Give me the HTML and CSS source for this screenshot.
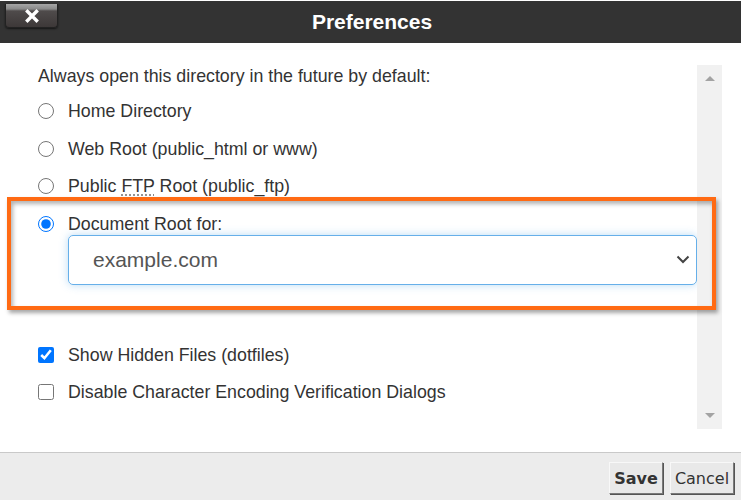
FILE: index.html
```html
<!DOCTYPE html>
<html>
<head>
<meta charset="utf-8">
<link rel="stylesheet" href="styles.css">
</head>
<body>
<div class="dialog">
  <div class="header">
    <div class="close-cell">
      <button class="close-btn" aria-label="Close">
        <svg width="14" height="14" viewBox="0 0 14 14"><path d="M2.5 2.5 L11.5 11.5 M11.5 2.5 L2.5 11.5" stroke="#fff" stroke-width="3.4" stroke-linecap="square"/></svg>
      </button>
    </div>
    <div class="title">Preferences</div>
    <div></div>
  </div>
  <div class="body">
    <div class="scroll">
      <div class="content">
        <div class="intro">Always open this directory in the future by default:</div>
        <label class="row r1"><input type="radio" name="dir" class="ctl"><span>Home Directory</span></label>
        <label class="row r2"><input type="radio" name="dir" class="ctl"><span>Web Root (public_html or www)</span></label>
        <label class="row r3"><input type="radio" name="dir" class="ctl"><span>Public <abbr title="File Transfer Protocol">FTP</abbr> Root (public_ftp)</span></label>
        <label class="row r4"><input type="radio" name="dir" class="ctl" checked><span>Document Root for:</span></label>
        <div class="select">
          <span class="select-text">example.com</span>
          <svg class="chevron" width="14" height="9" viewBox="0 0 14 9"><path d="M1.5 1.5 L7 7 L12.5 1.5" fill="none" stroke="#444" stroke-width="2"/></svg>
        </div>
        <label class="row r5"><input type="checkbox" class="ctl" checked><span>Show Hidden Files (dotfiles)</span></label>
        <label class="row r6"><input type="checkbox" class="ctl"><span>Disable Character Encoding Verification Dialogs</span></label>
      </div>
      <div class="scrollbar">
        <span class="arrow up"></span>
        <span class="arrow down"></span>
      </div>
    </div>
  </div>
  <div class="footer">
    <button class="btn save">Save</button>
    <button class="btn">Cancel</button>
  </div>
  <div class="highlight"></div>
</div>
</body>
</html>
```
FILE: styles.css
```css
* { box-sizing: border-box; }
html, body { margin: 0; padding: 0; background: #fff; }
body { font-family: "Liberation Sans", Arial, sans-serif; color: #333; }
.dialog { position: relative; width: 741px; height: 500px; padding-top: 1px; overflow: hidden; }

.header {
  height: 42px;
  background: #333;
  display: grid;
  grid-template-columns: 1fr auto 1fr;
  align-items: center;
}
.close-cell { align-self: start; }
.close-btn {
  margin: 3px 0 0 5px;
  width: 53px;
  height: 24px;
  border: 1px solid #222;
  border-top: none;
  border-radius: 0 0 4px 4px;
  background: linear-gradient(#a6a6a6 0, #8a8a8a 5px, #4f4b4b 7px, #3d3838 100%);
  display: flex;
  align-items: center;
  justify-content: center;
  padding: 0;
  box-shadow: 0 1px 2px rgba(0,0,0,.6);
}
.title {
  color: #fff;
  font-weight: bold;
  font-size: 21px;
  padding-left: 3px;
}

.body { height: 409px; padding: 22px 19px 23px 20px; }
.scroll { display: grid; grid-template-columns: 1fr 25px; height: 100%; }
.content { padding-left: 18px; font-size: 17.8px; }
.intro { line-height: 20px; height: 20px; margin-top: 1px; }
.row {
  display: flex;
  align-items: center;
  height: 20px;
  line-height: 20px;
}
.r1 { margin-top: 15px; }
.r2, .r3, .r4 { margin-top: 17.5px; }
.r5 { margin-top: 60px; }
.r6 { margin-top: 17px; }
.ctl {
  width: 16px;
  height: 16px;
  margin: 0 14px 0 0;
  accent-color: #0075ff;
  flex: none;
}
abbr { text-decoration: underline dotted #888; text-underline-offset: 3px; }

.select {
  margin: 1px 0 0 30px;
  height: 50px;
  border: 1px solid #66afe9;
  border-radius: 5px;
  box-shadow: 0 0 8px rgba(102,175,233,.45);
  display: flex;
  align-items: center;
  justify-content: space-between;
  padding: 0 6px 0 24px;
}
.select-text { font-size: 21px; color: #555; }

.scrollbar {
  background: #f1f1f1;
  display: flex;
  flex-direction: column;
  justify-content: space-between;
  align-items: center;
  padding: 11px 0 11px;
}
.arrow { width: 0; height: 0; border-left: 5px solid transparent; border-right: 5px solid transparent; }
.arrow.up { border-bottom: 5px solid #a3a3a3; }
.arrow.down { border-top: 5px solid #a3a3a3; }

.footer {
  height: 49px;
  border-top: 1px solid #c9c9c9;
  background: #ececec;
  display: flex;
  justify-content: flex-end;
  align-items: flex-start;
  gap: 7px;
  padding: 9px 7px 0 0;
}
.btn {
  height: 32px;
  font-family: "DejaVu Sans", Verdana, sans-serif;
  font-size: 16px;
  color: #333;
  background: #e9e9e9;
  border: 1px solid;
  border-color: #f8f8f8 #7a7a7a #7a7a7a #f8f8f8;
  box-shadow: 1px 1px 0 #555;
  padding: 0 3px;
}
.btn.save { font-weight: bold; width: 54px; }
.btn:not(.save) { width: 64px; }

.highlight {
  position: absolute;
  left: 7px;
  top: 197px;
  width: 709px;
  height: 113px;
  border: 4px solid #ff6a13;
  box-shadow: 2px 3px 4px rgba(0,0,0,.35), inset 2px 3px 4px rgba(0,0,0,.3);
  pointer-events: none;
}
```
